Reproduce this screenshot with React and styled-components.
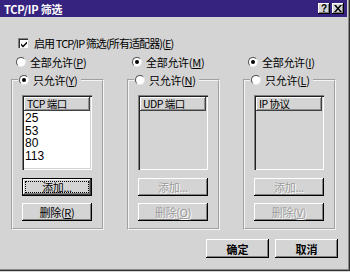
import styled, { createGlobalStyle } from 'styled-components'

const GlobalStyle = createGlobalStyle`
  body {
    margin: 0;
    background: #d4d4d4;
  }
  * {
    box-sizing: border-box;
  }
`

const groups = [
  { all: '全部允许', allKey: 'P', only: '只允许', onlyKey: 'Y', header: 'TCP 端口', items: ['25', '53', '80', '113'], del: '删除', delKey: 'R', enabled: true },
  { all: '全部允许', allKey: 'M', only: '只允许', onlyKey: 'N', header: 'UDP 端口', items: [], del: '删除', delKey: 'O', enabled: false },
  { all: '全部允许', allKey: 'I', only: '只允许', onlyKey: 'L', header: 'IP 协议', items: [], del: '删除', delKey: 'V', enabled: false },
]

function Label({ text, mnemonic }) {
  return (
    <span>
      {text}(<u>{mnemonic}</u>)
    </span>
  )
}

function App() {
  return (
    <Window>
      <GlobalStyle />
      <TitleBar>
        <Title>TCP/IP 筛选</Title>
        <TitleButtons>
          <TitleButton>?</TitleButton>
          <TitleButton>
            <svg width="8" height="7" viewBox="0 0 8 7">
              <path d="M0 0h2l2 2.5L6 0h2L5 3.5 8 7H6L4 4.5 2 7H0l3-3.5z" fill="#000" />
            </svg>
          </TitleButton>
        </TitleButtons>
      </TitleBar>

      <CheckRow>
        <CheckBox>
          <svg width="8" height="8" viewBox="0 0 8 8">
            <path d="M1 3.5l2 2L7 1.5v2L3 7.5 1 5.5z" fill="#000" />
          </svg>
        </CheckBox>
        <Text $tight>
          启用 TCP/IP 筛选(所有适配器)(<u>E</u>)
        </Text>
      </CheckRow>

      <Columns>
        {groups.map((g, i) => (
          <Column key={g.header}>
            <OptionRow>
              <Radio $checked={i !== 0} />
              <Text>
                <Label text={g.all} mnemonic={g.allKey} />
              </Text>
            </OptionRow>
            <Group>
              <Legend>
                <Radio $checked={i === 0} />
                <Text>
                  <Label text={g.only} mnemonic={g.onlyKey} />
                </Text>
              </Legend>
              <ListBox $enabled={g.enabled}>
                <ListHeader>{g.header}</ListHeader>
                <Items>
                  {g.items.map(item => (
                    <ListItem key={item}>{item}</ListItem>
                  ))}
                </Items>
              </ListBox>
              <GroupButton $default={g.enabled} disabled={!g.enabled}>
                {g.enabled ? <Focus>添加...</Focus> : '添加...'}
              </GroupButton>
              <GroupButton disabled={!g.enabled}>
                <Label text={g.del} mnemonic={g.delKey} />
              </GroupButton>
            </Group>
          </Column>
        ))}
      </Columns>

      <Footer>
        <DialogButton>确定</DialogButton>
        <DialogButton>取消</DialogButton>
      </Footer>
    </Window>
  )
}

const font = `"Noto Sans CJK SC", "Liberation Sans", sans-serif`

const Window = styled.div`
  width: 350px;
  height: 271px;
  background: #d4d4d4;
  box-shadow: inset -1px -1px #303030, inset -2px -2px #8a8a8a;
  font-family: ${font};
  font-size: 11px;
  color: #000;
  overflow: hidden;
`

const TitleBar = styled.div`
  height: 17px;
  margin-right: 3px;
  background: #36237f;
  display: flex;
  align-items: center;
  justify-content: space-between;
  padding: 0 3px 0 4px;
`

const Title = styled.div`
  color: #fff;
  font-weight: bold;
  font-size: 11px;
  letter-spacing: -0.2px;
`

const TitleButtons = styled.div`
  display: flex;
  gap: 2px;
`

const TitleButton = styled.div`
  width: 12px;
  height: 11px;
  background: #d4d4d4;
  box-shadow: inset -1px -1px #000, inset 1px 1px #fff, inset -2px -2px #808080;
  display: flex;
  align-items: center;
  justify-content: center;
  font-family: "Liberation Sans", sans-serif;
  font-weight: bold;
  font-size: 10px;
  line-height: 1;
`

const Text = styled.span`
  white-space: nowrap;
  line-height: 12px;
  letter-spacing: ${p => (p.$tight ? '-0.9px' : '-0.3px')};
`

const CheckRow = styled.div`
  display: flex;
  align-items: center;
  gap: 6px;
  height: 12px;
  margin-top: 20px;
  padding-left: 18px;
`

const CheckBox = styled.div`
  width: 10px;
  height: 10px;
  background: #fff;
  box-shadow: inset 1px 1px #808080, inset 2px 2px #303030;
  display: flex;
  align-items: center;
  justify-content: center;
  padding: 1px 0 0 1px;
`

const Columns = styled.div`
  display: flex;
  gap: 23px;
  margin: 7px 0 0 11px;
`

const Column = styled.div`
  width: 93px;
  display: flex;
  flex-direction: column;
`

const OptionRow = styled.div`
  display: flex;
  align-items: center;
  gap: 4px;
  height: 12px;
  padding-left: 5px;
`

const Radio = styled.span`
  flex: none;
  width: 10px;
  height: 10px;
  border-radius: 50%;
  background: #fff;
  border: 1px solid;
  border-color: #505050 #e8e8e8 #e8e8e8 #505050;
  display: flex;
  align-items: center;
  justify-content: center;

  &::after {
    content: '';
    width: 4px;
    height: 4px;
    border-radius: 50%;
    background: ${p => (p.$checked ? '#000' : 'transparent')};
  }
`

const Group = styled.fieldset`
  margin: 6px 0 0;
  padding: 9px 10px 7px 9px;
  min-width: 0;
  height: 156px;
  border: 2px groove #f4f4f4;
  display: flex;
  flex-direction: column;
`

const Legend = styled.legend`
  display: flex;
  align-items: center;
  gap: 4px;
  height: 12px;
  padding: 0 3px 0 1px;
  margin-left: -4px;
`

const ListBox = styled.div`
  height: 75px;
  background: ${p => (p.$enabled ? '#fff' : '#d4d4d4')};
  box-shadow: inset 1px 1px #808080, inset 2px 2px #202020, inset -1px -1px #fff, inset -2px -2px #d4d4d4;
  padding: 2px;
`

const ListHeader = styled.div`
  height: 14px;
  background: #d4d4d4;
  box-shadow: inset -1px -1px #404040, inset 1px 1px #fff, inset -2px -2px #909090;
  padding: 0 0 1px 3px;
  display: flex;
  align-items: center;
  font-size: 10.5px;
  line-height: 12px;
  letter-spacing: -0.5px;
  white-space: nowrap;
`

const Items = styled.div`
  padding-top: 1px;
`

const ListItem = styled.div`
  font-family: "Liberation Sans", sans-serif;
  font-size: 12px;
  line-height: 12.7px;
  height: 12.7px;
  padding-left: 1px;
`

const GroupButton = styled.button`
  height: 18px;
  margin-top: ${p => (p.$default ? '8px' : '7px')};
  padding: ${p => (p.$default ? '3px' : '0')};
  border: none;
  background: #d4d4d4;
  font-family: ${font};
  font-size: 11px;
  letter-spacing: -0.3px;
  color: #000;
  box-shadow: ${p =>
    p.$default
      ? 'inset 0 0 0 1px #000, inset -2px -2px #404040, inset 2px 2px #fff, inset -3px -3px #808080'
      : 'inset -1px -1px #000, inset 1px 1px #fff, inset -2px -2px #808080'};

  &:first-of-type {
    margin-top: 8px;
  }

  &:disabled {
    color: #9a9a9a;
    text-shadow: 1px 1px #fff;
  }
`

const Focus = styled.span`
  display: flex;
  align-items: center;
  justify-content: center;
  height: 100%;
  border: 1px dotted #000;
`

const Footer = styled.div`
  display: flex;
  justify-content: flex-end;
  gap: 6px;
  margin-top: 9px;
  padding-right: 12px;
`

const DialogButton = styled.button`
  width: 63px;
  height: 19px;
  padding: 0;
  border: none;
  background: #d4d4d4;
  font-family: ${font};
  font-size: 11px;
  font-weight: bold;
  color: #000;
  box-shadow: inset -1px -1px #000, inset 1px 1px #fff, inset -2px -2px #808080;
`

export default App
